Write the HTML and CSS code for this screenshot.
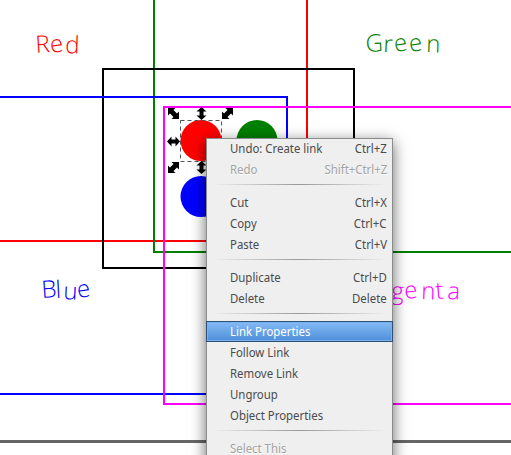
FILE: index.html
```html
<!DOCTYPE html>
<html lang="en">
<head>
<meta charset="utf-8">
<title>Drawing</title>
<link rel="stylesheet" href="styles.css">
</head>
<body>
<main class="workspace">
  <svg class="canvas" width="511" height="455" viewBox="0 0 511 455">
    <defs>
      <path id="arrow" d="M-6.5 0L-2-5V-2H2V-5L6.5 0L2 5V2H-2V5Z"/>
      <path id="corner" d="M-5.5-5.5H2L0-3.5L3.5 0L5.5-2V5.5H-2L0 3.5L-3.5 0L-5.5 2Z"/>
    </defs>
    <path class="page-edge" d="M0 441.5H511"/>
    <g class="frames">
      <rect class="red" x="-100" y="-100" width="407" height="341"/>
      <rect class="green" x="154" y="-100" width="500" height="352"/>
      <rect class="black" x="103" y="69" width="251" height="199"/>
      <rect class="blue" x="-100" y="97" width="387" height="297"/>
      <rect class="magenta" x="164" y="107" width="500" height="297"/>
    </g>
    <circle class="fill-red" cx="201" cy="140.5" r="20.5"/>
    <circle class="fill-green" cx="257" cy="140.5" r="20.5"/>
    <circle class="fill-blue" cx="201" cy="196.5" r="20.5"/>
    <rect class="selection" x="180.5" y="120.5" width="41" height="41"/>
    <g class="handles">
      <use href="#corner" transform="translate(173.5 113.5)"/>
      <use href="#arrow" transform="translate(201.5 113.5) rotate(90)"/>
      <use href="#corner" transform="translate(227.5 113.5) scale(-1 1)"/>
      <use href="#arrow" transform="translate(173.5 141.5)"/>
      <use href="#corner" transform="translate(173.5 167.5) scale(-1 1)"/>
      <use href="#arrow" transform="translate(201.5 167.5) rotate(90)"/>
    </g>
    <g class="labels">
      <text class="fill-red" x="36 51 65" y="53" rotate="-4 -8 2">Red</text>
      <text class="fill-green" x="366 383 395 410 426" y="52" rotate="-3 3 -8 -8 2">Green</text>
      <text class="fill-blue" x="42 56 63 78" y="298 298 299 298" rotate="-4 -3 3 -8">Blue</text>
      <text class="fill-magenta" x="391 405 421 436 447" y="299" rotate="3 -6 2 -4 3">genta</text>
    </g>
  </svg>
  <nav class="menu">
    <div class="item"><span>Undo: Create link</span><span class="key">Ctrl+Z</span></div>
    <div class="item disabled"><span>Redo</span><span class="key">Shift+Ctrl+Z</span></div>
    <div class="separator"></div>
    <div class="item"><span>Cut</span><span class="key">Ctrl+X</span></div>
    <div class="item"><span>Copy</span><span class="key">Ctrl+C</span></div>
    <div class="item"><span>Paste</span><span class="key">Ctrl+V</span></div>
    <div class="separator"></div>
    <div class="item"><span>Duplicate</span><span class="key">Ctrl+D</span></div>
    <div class="item"><span>Delete</span><span class="key">Delete</span></div>
    <div class="separator"></div>
    <div class="item active"><span>Link Properties</span></div>
    <div class="item"><span>Follow Link</span></div>
    <div class="item"><span>Remove Link</span></div>
    <div class="item"><span>Ungroup</span></div>
    <div class="item"><span>Object Properties</span></div>
    <div class="separator"></div>
    <div class="item disabled"><span>Select This</span></div>
  </nav>
</main>
</body>
</html>
```

FILE: styles.css
```css
body { margin: 0; background: #fff; }
.workspace { position: relative; width: 511px; height: 455px; overflow: hidden; }
.canvas { display: block; }
.page-edge { stroke: #666; stroke-width: 3; }
.frames rect { fill: none; stroke-width: 2; }
.frames .red { stroke: #f00; }
.frames .green { stroke: #008000; }
.frames .blue { stroke: #00f; }
.frames .black { stroke: #000; }
.frames .magenta { stroke: #f0f; }
.fill-red { fill: #f00; }
.fill-green { fill: #008000; }
.fill-blue { fill: #00f; }
.fill-magenta { fill: #f0f; }
.selection { fill: none; stroke: #555; stroke-dasharray: 4 3; }
.labels text { font: 300 24px "Open Sans", sans-serif; }

.menu {
  position: absolute;
  left: 206px;
  top: 138px;
  box-sizing: border-box;
  width: 187px;
  height: 340px;
  border: 1px solid #8b8c8c;
  background: #efefef;
  box-shadow: 0 4px 14px rgba(0, 0, 0, .6);
  color: #4b4b4b;
  font: 12.4px/21px "Noto Sans", sans-serif;
}
.item {
  display: flex;
  justify-content: space-between;
  box-sizing: border-box;
  height: 21px;
  padding: 0 5px 0 23px;
  white-space: nowrap;
}
.item:first-child { margin-top: -1px; }
.item span { transform: scaleX(.92); transform-origin: left; }
.item .key { transform-origin: right; }
.disabled { color: #a2a2a2; text-shadow: 0 1px #fff; }
.separator {
  height: 12px;
  background: linear-gradient(90deg, transparent 3%, #999 50%, transparent 97%) center 4px / 100% 1px no-repeat;
}
.active {
  margin: 0 -1px;
  padding: 0 5px 0 23px;
  border: 1px solid #2f4f73;
  background: linear-gradient(#86baf5, #4d8fda);
  box-shadow: inset 0 0 0 1px #77b1ef;
  color: #fff;
  line-height: 19px;
}
```
